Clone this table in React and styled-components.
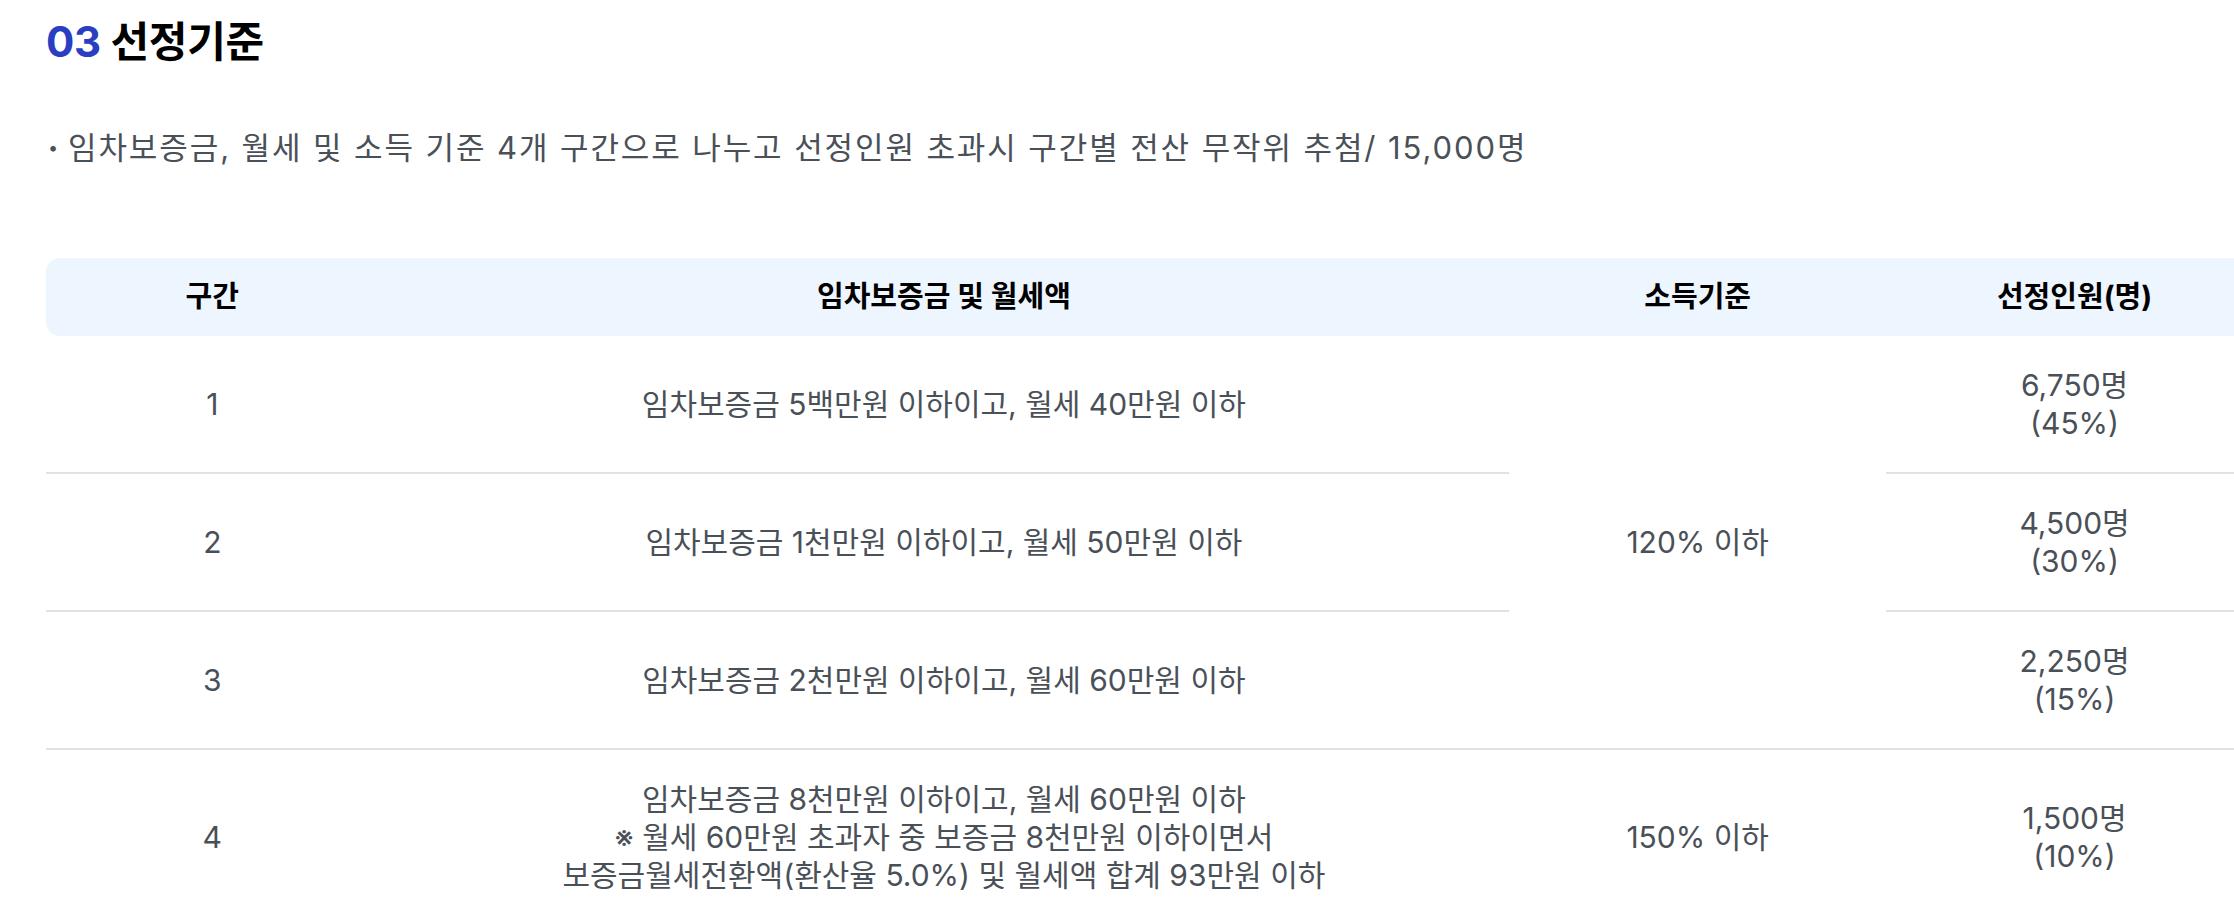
import styled, { createGlobalStyle } from "styled-components"

const GlobalStyle = createGlobalStyle`
  body {
    margin: 0;
    background: #fff;
    overflow: hidden;
    font-family: "Inter", "Noto Sans CJK KR", sans-serif;
  }
`;

const rows = [
  { no: 1, cond: ["임차보증금 5백만원 이하이고, 월세 40만원 이하"], count: "6,750명", rate: "(45%)" },
  { no: 2, cond: ["임차보증금 1천만원 이하이고, 월세 50만원 이하"], count: "4,500명", rate: "(30%)" },
  { no: 3, cond: ["임차보증금 2천만원 이하이고, 월세 60만원 이하"], count: "2,250명", rate: "(15%)" },
  {
    no: 4,
    cond: [
      "임차보증금 8천만원 이하이고, 월세 60만원 이하",
      "※ 월세 60만원 초과자 중 보증금 8천만원 이하이면서",
      "보증금월세전환액(환산율 5.0%) 및 월세액 합계 93만원 이하",
    ],
    count: "1,500명",
    rate: "(10%)",
  },
];

export default function App() {
  return (
    <>
      <GlobalStyle />
      <Container>
        <Title>
          <Num>03</Num> 선정기준
        </Title>
        <Note>
          <Dot>•</Dot>
          임차보증금, 월세 및 소득 기준 4개 구간으로 나누고 선정인원 초과시 구간별 전산 무작위 추첨/ 15,000명
        </Note>
        <Table>
          <colgroup>
            <col style={{ width: "15%" }} />
            <col style={{ width: "51%" }} />
            <col style={{ width: "17%" }} />
            <col style={{ width: "17%" }} />
          </colgroup>
          <thead>
            <tr>
              <Th>구간</Th>
              <Th>임차보증금 및 월세액</Th>
              <Th>소득기준</Th>
              <Th>선정인원(명)</Th>
            </tr>
          </thead>
          <tbody>
            {rows.map((r, i) => (
              <tr key={r.no}>
                <Td>{r.no}</Td>
                <Td>
                  {r.cond.map((line, idx) => (
                    <Line key={idx}>{line}</Line>
                  ))}
                </Td>
                {i === 0 && <Td rowSpan={3}>120% 이하</Td>}
                {i === 3 && <Td>150% 이하</Td>}
                <Td>
                  <Line>{r.count}</Line>
                  <Line>{r.rate}</Line>
                </Td>
              </tr>
            ))}
          </tbody>
        </Table>
      </Container>
    </>
  );
}

const Container = styled.div`
  padding: 16px 0 0 46px;
`;

const Title = styled.h2`
  margin: 0;
  font-size: 42px;
  font-weight: 700;
  line-height: 52px;
  color: #000;
  letter-spacing: -0.3px;
`;

const Num = styled.span`
  color: #2a3ec2;
`;

const Note = styled.p`
  margin: 60px 0 0;
  font-size: 31px;
  line-height: 40px;
  letter-spacing: 1.9px;
  color: #4a5058;
  display: flex;
  align-items: center;
`;

const Dot = styled.span`
  font-size: 18px;
  margin: 0 8px 0 2px;
  color: #4a5058;
`;

const Table = styled.table`
  margin-top: 90px;
  width: 2217px;
  table-layout: fixed;
  border-collapse: separate;
  border-spacing: 0;
`;

const Th = styled.th`
  background: #edf5fe;
  color: #000;
  font-size: 29px;
  font-weight: 700;
  line-height: 38px;
  padding: 20px 0;
  text-align: center;

  &:first-child {
    border-radius: 14px 0 0 14px;
  }
`;

const Td = styled.td`
  font-size: 30px;
  line-height: 38px;
  color: #4a5058;
  text-align: center;
  vertical-align: middle;
  padding: 30px 0;
  border-bottom: 2px solid #dfe3e8;
`;

const Line = styled.div``;
